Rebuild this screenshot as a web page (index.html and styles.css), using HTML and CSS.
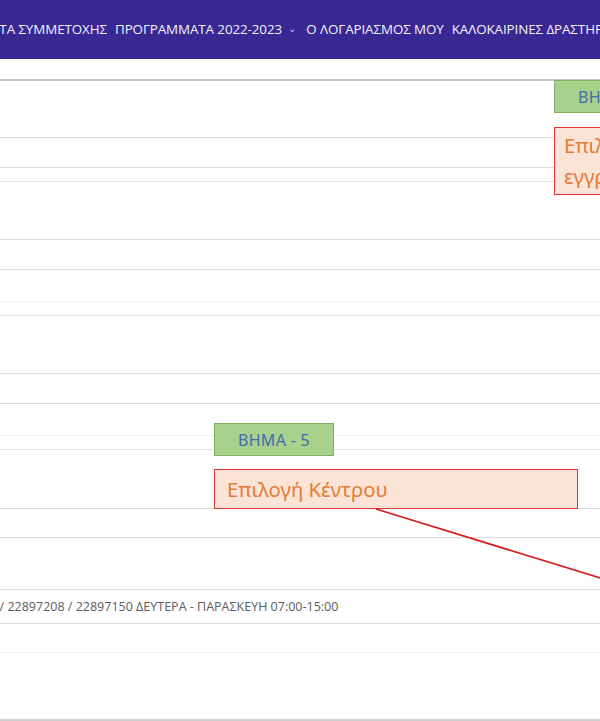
FILE: index.html
```html
<!DOCTYPE html>
<html lang="el">
<head>
    <meta charset="UTF-8">
    <meta name="viewport" content="width=device-width, initial-scale=1.0">
    <title>Εγγραφή - Βήματα</title>
    <link rel="stylesheet" href="styles.css">
</head>
<body>
    <div class="page">
        <header class="topbar">
            <nav class="menu">
                <a href="#">ΑΙΤΗΜΑΤΑ ΣΥΜΜΕΤΟΧΗΣ</a>
                <a href="#">ΠΡΟΓΡΑΜΜΑΤΑ 2022-2023 <span class="caret">&#8964;</span></a>
                <a href="#">Ο ΛΟΓΑΡΙΑΣΜΟΣ ΜΟΥ</a>
                <a href="#">ΚΑΛΟΚΑΙΡΙΝΕΣ ΔΡΑΣΤΗΡΙΟΤΗΤΕΣ</a>
            </nav>
        </header>

        <div class="form-table">
            <div class="row first h58"></div>
            <div class="row h30"></div>
            <div class="row h14"></div>
            <div class="row light h58"></div>
            <div class="row h30"></div>
            <div class="row h32"></div>
            <div class="row faint h14"></div>
            <div class="row light h58"></div>
            <div class="row h30"></div>
            <div class="row h32"></div>
            <div class="row faint h14"></div>
            <div class="row light h59"></div>
            <div class="row h29"></div>
            <div class="row h52"></div>
            <div class="row h34 info">
                <span>ΤΗΛ. 22897100 / 22897208 / 22897150 ΔΕΥΤΕΡΑ - ΠΑΡΑΣΚΕΥΗ 07:00-15:00</span>
            </div>
            <div class="row h29"></div>
            <div class="row faint h67"></div>
            <div class="row last"></div>
        </div>

        <!-- annotations drawn over the screenshot -->
        <div class="step step-4">ΒΗΜΑ - 4</div>
        <div class="note note-4">Επιλογή Προγράμματος<br>εγγραφής</div>

        <div class="step step-5">ΒΗΜΑ - 5</div>
        <div class="note note-5">Επιλογή Κέντρου</div>

        <svg class="arrow" width="600" height="721" viewBox="0 0 600 721">
            <line x1="376" y1="509" x2="620" y2="584" stroke="#d42020" stroke-width="1.8"/>
        </svg>
    </div>
</body>
</html>
```

FILE: styles.css
```css
* {
    box-sizing: border-box;
}
body {
    margin: 0;
    background: #fff;
    font-family: "Open Sans", "Noto Sans", sans-serif;
    overflow: hidden;
}
.page {
    position: relative;
    width: 600px;
    height: 721px;
    overflow: hidden;
}
.topbar {
    height: 59px;
    background: #392792;
    display: flex;
    align-items: center;
    overflow: hidden;
    margin-bottom: 20px;
}
.menu {
    display: flex;
    gap: 8px;
    white-space: nowrap;
    margin-left: -50px;
    padding-bottom: 1px;
}
.menu a {
    color: #f4f2ff;
    text-decoration: none;
    font-size: 13.4px;
    letter-spacing: -0.1px;
}
.caret {
    font-size: 10px;
    margin-left: 3px;
    margin-right: 2px;
    color: #c9c3ee;
    vertical-align: 2px;
}
.form-table {
    display: flex;
    flex-direction: column;
}
.row {
    border-top: 1px solid #dcdcdc;
}
.row.first {
    border-top: 2px solid #c6c6c6;
}
.row.light {
    border-top-color: #e6e6e6;
}
.row.faint {
    border-top-color: #f0f0f0;
}
.row.last {
    border-top: 2px solid #cfcfcf;
    height: 4px;
}
.h14 { height: 14px; }
.h29 { height: 29px; }
.h30 { height: 30px; }
.h32 { height: 32px; }
.h34 { height: 34px; }
.h52 { height: 52px; }
.h58 { height: 58px; }
.h59 { height: 59px; }
.h67 { height: 67px; }
.info {
    display: flex;
    align-items: center;
    overflow: hidden;
}
.info span {
    margin-left: -91px;
    white-space: nowrap;
    font-size: 12.5px;
    color: #5c5c5c;
}
.step {
    position: absolute;
    width: 120px;
    height: 33px;
    background: #a9d18e;
    border: 1px solid #7fb25c;
    color: #3f6fa8;
    font-family: "Noto Sans", "Open Sans", sans-serif;
    font-size: 16px;
    letter-spacing: 0.3px;
    display: flex;
    align-items: center;
    justify-content: center;
}
.step-4 {
    left: 554px;
    top: 80px;
}
.step-5 {
    left: 214px;
    top: 423px;
}
.note {
    position: absolute;
    background: #fbe4d5;
    border: 1px solid #dc3535;
    color: #e47b35;
    font-family: "Noto Sans", "Open Sans", sans-serif;
    font-size: 20.3px;
    padding-left: 9px;
}
.note-4 {
    left: 554px;
    top: 127px;
    width: 260px;
    height: 68px;
    line-height: 31px;
    padding-top: 2px;
}
.note-5 {
    left: 214px;
    top: 469px;
    width: 364px;
    height: 40px;
    line-height: 38px;
    padding-left: 12px;
}
.arrow {
    position: absolute;
    left: 0;
    top: 0;
    pointer-events: none;
}
```
